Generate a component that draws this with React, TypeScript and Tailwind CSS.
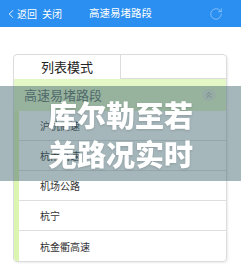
import { ChevronLeft, ChevronsUp, RotateCw } from 'lucide-react';

const ROADS = ['沪杭高速', '杭甬高速', '机场公路', '杭宁', '杭金衢高速'];

export default function App() {
  return (
    <div className="relative w-[241px] h-[271px] bg-white overflow-hidden font-['Noto_Sans_CJK_SC','Noto_Sans',sans-serif]">
      <div className="h-[27px] bg-[#2a8ff0] flex items-center text-white">
        <div className="flex items-center w-[70px] pl-[4px]">
          <ChevronLeft size={14} strokeWidth={1.5} className="-mr-[1px]" />
          <span className="text-[10px] leading-none">返回</span>
          <span className="text-[10px] leading-none ml-[5px]">关闭</span>
        </div>
        <div className="flex-1 text-center text-[10.5px] leading-none pr-[30px]">高速易堵路段</div>
        <div className="w-[40px] flex justify-start pl-[8px]">
          <RotateCw size={14} strokeWidth={1} className="text-[#b8dafc]" />
        </div>
      </div>

      <div className="px-[13px] pt-[27px]">
        <div className="w-[214px] border border-[#dcdcdc] rounded-[4px] shadow-[1px_1px_2px_rgba(0,0,0,0.08)] overflow-hidden">
          <div className="flex h-[24px]">
            <div className="w-[106px] flex items-center justify-center text-[13px] text-[#222]">列表模式</div>
            <div className="flex-1 border-l border-b border-[#dcdcdc]" />
          </div>
          <div className="h-[32px] bg-[#e3f8c6] flex items-center justify-between pl-[10px] pr-[10px]">
            <span className="text-[13px] text-[#5a6a66]">高速易堵路段</span>
            <span className="w-[14px] h-[12px] rounded-full bg-[#dfe9d4] flex items-center justify-center">
              <ChevronsUp size={10} strokeWidth={1.5} className="text-[#6f7f80]" />
            </span>
          </div>
          <div className="flex">
            <div className="w-[5px] bg-[#dcf5b0]" />
            <div className="flex-1">
              {ROADS.map((r, i) => (
                <div
                  key={r}
                  className={`h-[30px] flex items-center pl-[21px] text-[10px] text-[#333] ${i < ROADS.length - 1 ? 'border-b border-[#dedede]' : ''}`}
                >
                  {r}
                </div>
              ))}
            </div>
          </div>
        </div>
      </div>

      <div className="absolute left-0 right-0 top-[86px] h-[95px] bg-[rgba(70,105,112,0.48)] flex flex-col items-center justify-center">
        <div className="text-white font-black text-[29px] leading-[39px] drop-shadow-[0_1px_1px_rgba(0,0,0,0.15)]">
          库尔勒至若
        </div>
        <div className="text-white font-black text-[29px] leading-[39px] drop-shadow-[0_1px_1px_rgba(0,0,0,0.15)]">
          羌路况实时
        </div>
      </div>
    </div>
  );
}
